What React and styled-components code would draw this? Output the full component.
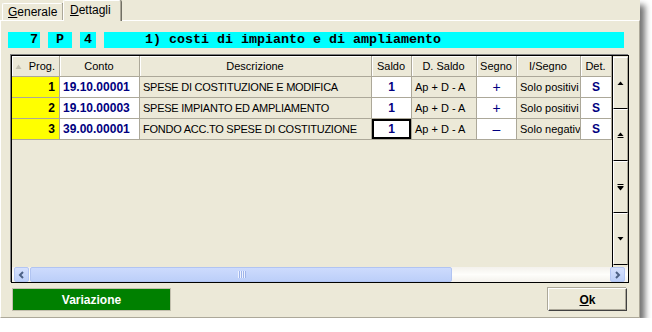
import React from "react";
import styled, { createGlobalStyle } from "styled-components";

const GlobalStyle = createGlobalStyle`
  body {
    margin: 0;
    background: #ffffff;
    font-family: "Liberation Sans", Arial, sans-serif;
  }
`;

const Window = styled.div`
  width: 640px;
  height: 318px;
  background: #ece9d8;
  box-shadow: 5px 5px 6px rgba(0, 0, 0, 0.55);
  display: flex;
  flex-direction: column;
  box-sizing: border-box;
`;

const TabStrip = styled.div`
  display: flex;
  align-items: flex-end;
  height: 20px;
  padding-left: 2px;
`;

const Tab = styled.div`
  position: relative;
  z-index: ${(p) => (p.$active ? 2 : 1)};
  box-sizing: border-box;
  width: ${(p) => p.$w}px;
  height: ${(p) => (p.$active ? 21 : 17)}px;
  margin-bottom: ${(p) => (p.$active ? -1 : 0)}px;
  padding-left: ${(p) => (p.$active ? 6 : 5)}px;
  padding-top: ${(p) => (p.$active ? 2 : 1)}px;
  background: #ece9d8;
  border-top: 1px solid #ffffff;
  border-left: 1px solid #ffffff;
  border-right: 1px solid #aca899;
  box-shadow: 1px 0 0 #716f64;
  border-radius: 2px 2px 0 0;
  font-size: 12px;
  line-height: 14px;
  color: #000;
  u {
    text-decoration: underline;
  }
`;

const Panel = styled.div`
  flex: 1;
  box-sizing: border-box;
  border-top: 1px solid #ffffff;
  border-left: 1px solid #ffffff;
  border-right: 1px solid #aca899;
  border-bottom: 1px solid #aca899;
  padding: 11px 8px 6px 7px;
  display: flex;
  flex-direction: column;
`;

const InfoBar = styled.div`
  display: flex;
  gap: 8px;
`;

const InfoBox = styled.div`
  box-sizing: border-box;
  width: ${(p) => p.$w}px;
  height: 16px;
  background: #00ffff;
  font-family: "Liberation Mono", "Courier New", monospace;
  font-weight: bold;
  font-size: 13.33px;
  line-height: 16px;
  color: #000;
  text-align: ${(p) => p.$align || "center"};
  padding: ${(p) => p.$pad || "0"};
  white-space: pre;
`;

const Grid = styled.div`
  margin: 7px 0 0 3px;
  width: 618px;
  height: 228px;
  box-sizing: border-box;
  border: 1px solid #000;
  box-shadow: -1px -1px 0 #808080;
  background: #ece9d8;
  display: flex;
  flex-direction: column;
`;

const GridBody = styled.div`
  display: flex;
  flex: 1;
  min-height: 0;
`;

const Table = styled.div`
  width: 600px;
  display: flex;
  flex-direction: column;
`;

const Row = styled.div`
  display: grid;
  grid-template-columns: 48px 80px 232px 40px 65px 40px 64px 31px;
  height: 21px;
`;

const HeadCell = styled.div`
  box-sizing: border-box;
  display: flex;
  align-items: center;
  justify-content: ${(p) => p.$justify || "center"};
  padding: 0 4px 0 3px;
  border-right: 1px solid #aca899;
  border-bottom: 1px solid #aca899;
  box-shadow: inset 1px 1px 0 #ffffff;
  font-size: 11px;
  color: #000;
  white-space: nowrap;
`;

const Cell = styled.div`
  box-sizing: border-box;
  display: flex;
  align-items: center;
  justify-content: ${(p) => p.$justify || "flex-start"};
  padding: ${(p) => p.$pad || "0 3px"};
  background: ${(p) => p.$bg || "#ece9d8"};
  border-right: 1px solid #aca899;
  border-bottom: 1px solid #aca899;
  box-shadow: ${(p) => (p.$focus ? "inset 0 0 0 2px #000" : "none")};
  font-size: ${(p) => (p.$strong ? 12 : 11)}px;
  font-weight: ${(p) => (p.$strong ? "bold" : "normal")};
  letter-spacing: ${(p) => p.$tight || 0}px;
  color: ${(p) => p.$color || "#000"};
  white-space: nowrap;
  overflow: hidden;
`;

const SignCell = styled(Cell)`
  font-size: 14px;
`;

const VScroll = styled.div`
  width: 16px;
  box-sizing: border-box;
  border-left: 1px solid #000;
  padding: 1px 0 2px;
  display: flex;
  flex-direction: column;
`;

const VButton = styled.div`
  flex: 1;
  box-sizing: border-box;
  border-top: 1px solid #ffffff;
  border-left: 1px solid #ffffff;
  border-right: 1px solid #aca899;
  border-bottom: 1px solid #000;
  display: flex;
  align-items: center;
  justify-content: center;
`;

const HScroll = styled.div`
  height: 15px;
  box-sizing: border-box;
  padding: 0 3px 0 2px;
  display: flex;
  background: linear-gradient(#f3f1ec, #fefefb 50%, #f3f1ec);
`;

const ArrowButton = styled.div`
  width: 15px;
  height: 15px;
  box-sizing: border-box;
  border: 1px solid #b4c6f3;
  border-radius: 2px;
  background: linear-gradient(#d6e1fd, #bccff9);
  display: flex;
  align-items: center;
  justify-content: center;
`;

const Thumb = styled.div`
  margin-left: 1px;
  width: 422px;
  height: 15px;
  box-sizing: border-box;
  border: 1px solid #b1c4f2;
  border-radius: 2px;
  background: linear-gradient(#cddbfd, #bccff9);
  display: flex;
  align-items: center;
  justify-content: center;
  gap: 1px;
`;

const Grip = styled.span`
  width: 1px;
  height: 7px;
  background: #eef3ff;
  box-shadow: 1px 0 0 #9eb4ea;
`;

const Track = styled.div`
  flex: 1;
`;

const Footer = styled.div`
  margin: 5px 0 0 4px;
  width: 615px;
  display: flex;
  justify-content: space-between;
`;

const GreenButton = styled.div`
  width: 159px;
  height: 23px;
  box-sizing: border-box;
  background: #008000;
  border: 1px solid #c2bfae;
  color: #fff;
  font-weight: bold;
  font-size: 12px;
  display: flex;
  align-items: center;
  justify-content: center;
`;

const OkButton = styled.div`
  width: 79px;
  height: 23px;
  box-sizing: border-box;
  background: #ece9d8;
  border-top: 1px solid #ffffff;
  border-left: 1px solid #ffffff;
  border-right: 1px solid #404040;
  border-bottom: 1px solid #404040;
  box-shadow: inset -1px -1px 0 #aca899, -1px -1px 0 #aca899;
  font-weight: bold;
  font-size: 12px;
  color: #000;
  display: flex;
  align-items: center;
  justify-content: center;
  u {
    text-decoration: underline;
  }
`;

const Up = () => (
  <svg width="7" height="4" viewBox="0 0 7 4">
    <polygon points="0.5,4 3.5,0.5 6.5,4" fill="#000" />
  </svg>
);
const Down = () => (
  <svg width="7" height="4" viewBox="0 0 7 4">
    <polygon points="0.5,0 3.5,3.5 6.5,0" fill="#000" />
  </svg>
);
const PageUp = () => (
  <svg width="7" height="7" viewBox="0 0 7 7">
    <polygon points="0.5,4 3.5,0.5 6.5,4" fill="#000" />
    <rect x="0.5" y="5" width="6" height="1" fill="#000" />
  </svg>
);
const PageDown = () => (
  <svg width="7" height="7" viewBox="0 0 7 7">
    <rect x="0.5" y="0" width="6" height="1" fill="#000" />
    <rect x="0.5" y="2" width="6" height="1" fill="#000" />
    <polygon points="0.5,3 3.5,6.5 6.5,3" fill="#000" />
  </svg>
);
const Chevron = ({ dir }) => (
  <svg width="7" height="8" viewBox="0 0 7 8">
    <polyline
      points={dir === "left" ? "5,1 2,4 5,7" : "2,1 5,4 2,7"}
      fill="none"
      stroke="#4d6185"
      strokeWidth="2"
    />
  </svg>
);
const SortMark = () => (
  <svg width="7" height="5" viewBox="0 0 7 5">
    <polygon points="0.5,5 3.5,0.5 6.5,5" fill="#c5c2b2" />
  </svg>
);

const rows = [
  { n: 1, conto: "19.10.00001", desc: "SPESE DI COSTITUZIONE E MODIFICA", segno: "+", i: "Solo positivi" },
  { n: 2, conto: "19.10.00003", desc: "SPESE IMPIANTO ED AMPLIAMENTO", segno: "+", i: "Solo positivi" },
  { n: 3, conto: "39.00.00001", desc: "FONDO ACC.TO SPESE DI COSTITUZIONE", segno: "–", i: "Solo negativi", focus: true },
];

const NAVY = "#000080";

export default function App() {
  return (
    <>
      <GlobalStyle />
      <Window>
        <TabStrip>
          <Tab $w={61}>
            <u>G</u>enerale
          </Tab>
          <Tab $w={58} $active>
            <u>D</u>ettagli
          </Tab>
        </TabStrip>
        <Panel>
          <InfoBar>
            <InfoBox $w={32} $align="right" $pad="0 2px 0 0">7</InfoBox>
            <InfoBox $w={24}>P</InfoBox>
            <InfoBox $w={16}>4</InfoBox>
            <InfoBox $w={520} $align="left" $pad="0 0 0 41px">
              1) costi di impianto e di ampliamento
            </InfoBox>
          </InfoBar>
          <Grid>
            <GridBody>
              <Table>
                <Row>
                  <HeadCell $justify="space-between">
                    <SortMark />
                    Prog.
                  </HeadCell>
                  <HeadCell>Conto</HeadCell>
                  <HeadCell>Descrizione</HeadCell>
                  <HeadCell>Saldo</HeadCell>
                  <HeadCell>D. Saldo</HeadCell>
                  <HeadCell>Segno</HeadCell>
                  <HeadCell>I/Segno</HeadCell>
                  <HeadCell>Det.</HeadCell>
                </Row>
                {rows.map((r) => (
                  <Row key={r.n}>
                    <Cell $bg="#ffff00" $strong $justify="flex-end" $pad="0 4px">
                      {r.n}
                    </Cell>
                    <Cell $bg="#fff" $strong $color={NAVY}>
                      {r.conto}
                    </Cell>
                    <Cell $tight={-0.25}>{r.desc}</Cell>
                    <Cell $bg="#fff" $strong $color={NAVY} $justify="center" $focus={r.focus}>
                      1
                    </Cell>
                    <Cell>Ap + D - A</Cell>
                    <SignCell $bg="#fff" $color={NAVY} $justify="center">
                      {r.segno}
                    </SignCell>
                    <Cell>{r.i}</Cell>
                    <Cell $bg="#fff" $strong $color={NAVY} $justify="center">
                      S
                    </Cell>
                  </Row>
                ))}
              </Table>
              <VScroll>
                <VButton>
                  <Up />
                </VButton>
                <VButton>
                  <PageUp />
                </VButton>
                <VButton>
                  <PageDown />
                </VButton>
                <VButton>
                  <Down />
                </VButton>
              </VScroll>
            </GridBody>
            <HScroll>
              <ArrowButton>
                <Chevron dir="left" />
              </ArrowButton>
              <Thumb>
                <Grip />
                <Grip />
                <Grip />
                <Grip />
              </Thumb>
              <Track />
              <ArrowButton>
                <Chevron dir="right" />
              </ArrowButton>
            </HScroll>
          </Grid>
          <Footer>
            <GreenButton>Variazione</GreenButton>
            <OkButton>
              <u>O</u>k
            </OkButton>
          </Footer>
        </Panel>
      </Window>
    </>
  );
}
